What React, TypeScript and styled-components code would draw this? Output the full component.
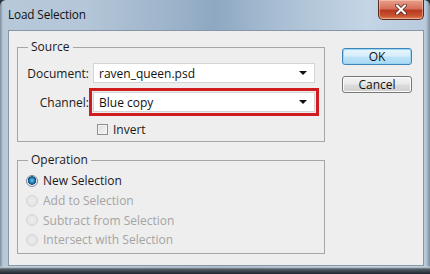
import styled, { createGlobalStyle } from "styled-components";

const GlobalStyle = createGlobalStyle`
    html, body {
        margin: 0;
        padding: 0;
        background: #2b333b;
    }
    body {
        font-family: "Open Sans", "Liberation Sans", sans-serif;
    }
`;

const Window = styled.div`
    width: 430px;
    height: 274px;
    box-sizing: border-box;
    display: flex;
    flex-direction: column;
    padding: 0 6px 8px 8px;
    border-radius: 6px 6px 0 0;
    background:
        linear-gradient(to bottom, transparent 266px, #cdd6de 267px, #55606b 269px, #1d242b 274px),
        linear-gradient(90deg, #7e8d9c 0px, #b7c8d9 3px, #b4c6d8 20%, #9fb5cb 38%, #8ea8c2 50%, #a9bed3 65%, #c4d5e5 85%, #b8cadc 99%, #7e8d9c 100%);
`;

const TitleBar = styled.div`
    height: 30px;
    display: flex;
    align-items: flex-start;
`;

const Title = styled.div`
    margin-top: 6px;
    font-family: "Open Sans", sans-serif;
    font-size: 11.8px;
    color: #111;
    letter-spacing: -0.15px;
`;

const CloseButton = styled.button`
    margin-left: auto;
    width: 46px;
    height: 20px;
    padding: 0;
    border: 1px solid #5a2a22;
    border-top: none;
    border-radius: 0 0 5px 5px;
    background: linear-gradient(to bottom, #e7a08d 0%, #d6705a 45%, #b93a22 55%, #c9552f 85%, #e08a60 100%);
    box-shadow: inset 0 0 0 1px rgba(255, 220, 200, 0.45);
    display: flex;
    align-items: center;
    justify-content: center;
`;

const Client = styled.div`
    flex: 1;
    display: flex;
    align-items: flex-start;
    background: #eeeeee;
    border: 1px solid #8796a6;
    padding: 9px 0 0 8px;
`;

const Groups = styled.div`
    width: 308px;
    display: flex;
    flex-direction: column;
    gap: 11px;
`;

const Group = styled.fieldset`
    margin: 0;
    border: 1px solid #a6a6a6;
    padding: 0 9px 0 0;
`;

const Legend = styled.legend`
    margin-left: 10px;
    padding: 0 3px;
    font-size: 12px;
    line-height: 14px;
    color: #1a1a1a;
`;

const FieldGrid = styled.div`
    display: grid;
    grid-template-columns: 71px 222px;
    column-gap: 4px;
    row-gap: 9px;
    align-items: center;
    padding: 9px 0 3px 0;
`;

const Label = styled.label`
    text-align: right;
    font-size: 12px;
    color: #1a1a1a;
`;

const Select = styled.div<{ $highlight?: boolean }>`
    height: 20px;
    box-sizing: border-box;
    background: #fff;
    border: 1px solid #d4d4d4;
    display: flex;
    align-items: center;
    padding: 0 7px 0 5px;
    font-size: 12px;
    color: #111;
    outline: ${(p) => (p.$highlight ? "3px solid #d01c1f" : "none")};
    outline-offset: 1px;
`;

const SelectText = styled.span`
    flex: 1;
`;

const Arrow = styled.span`
    width: 0;
    height: 0;
    border-left: 4px solid transparent;
    border-right: 4px solid transparent;
    border-top: 4px solid #111;
`;

const CheckRow = styled.label`
    grid-column: 2;
    display: flex;
    align-items: center;
    gap: 5px;
    margin-left: 4px;
    font-size: 12px;
    color: #1a1a1a;
`;

const CheckBox = styled.span`
    width: 11px;
    height: 11px;
    box-sizing: border-box;
    border: 1px solid #8f8f8f;
    background: linear-gradient(135deg, #dcdcdc, #f7f7f7);
    box-shadow: inset 0 0 0 1px #f4f4f4;
`;

const RadioList = styled.div`
    display: flex;
    flex-direction: column;
    padding: 4px 0 3px 8px;
`;

const RadioRow = styled.div<{ $disabled?: boolean }>`
    height: 19.7px;
    display: flex;
    align-items: center;
    gap: 5px;
    font-size: 12px;
    color: ${(p) => (p.$disabled ? "#a4a4a4" : "#1a1a1a")};
`;

const Radio = styled.span<{ $checked?: boolean; $disabled?: boolean }>`
    width: 12px;
    height: 12px;
    box-sizing: border-box;
    border-radius: 50%;
    border: 1px solid ${(p) => (p.$disabled ? "#d2d2d2" : "#7f8a94")};
    background: ${(p) =>
        p.$checked
            ? "radial-gradient(circle at 50% 45%, #7fd0f4 0, #2b8ac4 2px, #12507f 4px, #f2f2f2 4.6px, #e2e2e2 100%)"
            : p.$disabled
            ? "radial-gradient(circle, #ececec, #e2e2e2)"
            : "#f4f4f4"};
`;

const Buttons = styled.div`
    margin-left: 17px;
    margin-top: 8px;
    display: flex;
    flex-direction: column;
    gap: 11px;
`;

const Button = styled.button<{ $primary?: boolean }>`
    width: 70px;
    height: 17px;
    padding: 0;
    border-radius: 3px;
    font-family: "Open Sans", sans-serif;
    font-size: 12px;
    line-height: 15px;
    color: #111;
    border: 1px solid ${(p) => (p.$primary ? "#3d84b8" : "#777")};
    background: ${(p) =>
        p.$primary
            ? "linear-gradient(to bottom, #e8f6fd 0%, #d6eefb 48%, #bfe3f7 52%, #a8d8f2 100%)"
            : "linear-gradient(to bottom, #f4f4f4 0%, #e9e9e9 48%, #dcdcdc 52%, #cfcfcf 100%)"};
    box-shadow: inset 0 0 0 1px ${(p) => (p.$primary ? "#9cd6f5" : "#fbfbfb")};
`;

const operations = [
    { label: "New Selection", checked: true, disabled: false },
    { label: "Add to Selection", checked: false, disabled: true },
    { label: "Subtract from Selection", checked: false, disabled: true },
    { label: "Intersect with Selection", checked: false, disabled: true },
];

function App() {
    return (
        <>
            <GlobalStyle />
            <Window>
                <TitleBar>
                    <Title>Load Selection</Title>
                    <CloseButton aria-label="Close">
                        <svg width="12" height="11" viewBox="0 0 12 11">
                            <path d="M2 1.5 L10 9.5 M10 1.5 L2 9.5" stroke="#4a1a12" strokeWidth="3.6" strokeLinecap="round" />
                            <path d="M2 1.5 L10 9.5 M10 1.5 L2 9.5" stroke="#fff" strokeWidth="2.2" strokeLinecap="round" />
                        </svg>
                    </CloseButton>
                </TitleBar>
                <Client>
                    <Groups>
                        <Group>
                            <Legend>Source</Legend>
                            <FieldGrid>
                                <Label>Document:</Label>
                                <Select>
                                    <SelectText>raven_queen.psd</SelectText>
                                    <Arrow />
                                </Select>
                                <Label>Channel:</Label>
                                <Select $highlight>
                                    <SelectText>Blue copy</SelectText>
                                    <Arrow />
                                </Select>
                                <CheckRow>
                                    <CheckBox />
                                    Invert
                                </CheckRow>
                            </FieldGrid>
                        </Group>
                        <Group>
                            <Legend>Operation</Legend>
                            <RadioList>
                                {operations.map((op) => (
                                    <RadioRow key={op.label} $disabled={op.disabled}>
                                        <Radio $checked={op.checked} $disabled={op.disabled} />
                                        {op.label}
                                    </RadioRow>
                                ))}
                            </RadioList>
                        </Group>
                    </Groups>
                    <Buttons>
                        <Button $primary>OK</Button>
                        <Button>Cancel</Button>
                    </Buttons>
                </Client>
            </Window>
        </>
    );
}

export default App;
